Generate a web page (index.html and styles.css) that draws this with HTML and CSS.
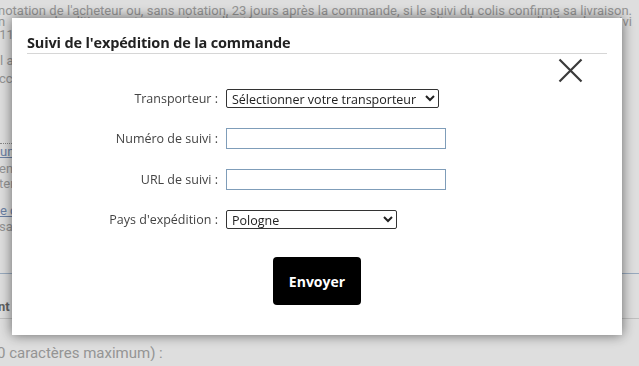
FILE: index.html
```html
<!DOCTYPE html>
<html lang="fr">
<head>
<meta charset="utf-8">
<title>Suivi de l'expédition de la commande</title>
<link rel="stylesheet" href="styles.css">
</head>
<body>
<div class="page">
  <p class="bg-line l1">notation de l'acheteur ou, sans notation, 23 jours après la commande, si le suivi du colis confirme sa livraison.</p>
  <p class="bg-line l2">n cas de litige, notre service client vous accompagne ; consultez la page d'aide du suivi</p>
  <p class="bg-line l3">'11 avril</p>
  <p class="bg-line l4">l a été expédié.</p>
  <p class="bg-line l5">cc</p>
  <div class="bg-dots"></div>
  <p class="bg-line l6"><a class="bg-link">un</a></p>
  <p class="bg-line l7">enr</p>
  <p class="bg-line l8">ter</p>
  <p class="bg-line l9"><a class="bg-link">e c</a></p>
  <p class="bg-line l10">sac</p>
  <div class="bg-rule blue"></div>
  <p class="bg-line bold l11">nt</p>
  <div class="bg-rule grey"></div>
  <p class="bg-line l12">0 caractères maximum) :</p>
</div>
<div class="overlay"></div>
<div class="modal" role="dialog">
  <div class="modal-header">
    <h2 class="modal-title">Suivi de l'expédition de la commande</h2>
  </div>
  <button class="close" aria-label="Fermer">
    <svg width="25" height="25" viewBox="0 0 25 25"><path d="M1.5 1.5 L23.5 23.5 M23.5 1.5 L1.5 23.5" stroke="#3a3a3a" stroke-width="2.2" fill="none"/></svg>
  </button>
  <form class="form">
    <div class="row">
      <label class="label">Transporteur :</label>
      <select class="select carrier"><option>Sélectionner votre transporteur</option></select>
    </div>
    <div class="row">
      <label class="label">Numéro de suivi :</label>
      <input class="input" type="text">
    </div>
    <div class="row">
      <label class="label">URL de suivi :</label>
      <input class="input" type="text">
    </div>
    <div class="row">
      <label class="label">Pays d'expédition :</label>
      <select class="select country"><option>Pologne</option></select>
    </div>
    <div class="actions">
      <button type="button" class="submit">Envoyer</button>
    </div>
  </form>
</div>
</body>
</html>
```
FILE: styles.css
```css
html, body {
  margin: 0;
  padding: 0;
}
body {
  background: #ffffff;
  font-family: "Open Sans", "Noto Sans", sans-serif;
  width: 639px;
  height: 366px;
  overflow: hidden;
  position: relative;
}
.page {
  color: #ababab;
  font-family: Roboto, "Open Sans", sans-serif;
  font-size: 13px;
  line-height: 14px;
  overflow: hidden;
  width: 639px;
}
.bg-line {
  margin: 0;
  white-space: nowrap;
}
.l1 {
  padding-top: 4px;
  margin-left: -2px;
  width: 634px;
  text-align: justify;
  text-align-last: justify;
}
.l2 {
  margin-top: -3px;
  margin-left: -2px;
  width: 634px;
  text-align: justify;
  text-align-last: justify;
}
.l3 { margin-top: -1px; margin-left: -3px; }
.l4 { margin-top: 12px; }
.l5 { margin-top: 4px; margin-left: -1px; }
.bg-dots {
  margin-top: 57px;
  border-top: 1px dotted #9a9a9a;
  width: 40px;
}
.l6 { margin-top: 1px; }
.bg-link { color: #7d95bd; text-decoration: underline; }
.l7 { margin-top: 3px; margin-left: -1px; }
.l8 { margin-top: 1px; margin-left: -1px; }
.l9 { margin-top: 13px; }
.l10 { margin-top: 2px; margin-left: -1px; }
.bg-rule { height: 0; }
.bg-rule.blue { margin-top: 39px; border-top: 1px solid #afc3da; }
.bg-rule.grey { margin-top: 4px; border-top: 1px solid #dcdcdc; }
.bold { font-weight: 700; color: #707070; }
.l11 { margin-top: 26px; margin-left: -2px; }
.l12 { margin-top: 26px; margin-left: -3px; font-size: 15px; line-height: 16px; }

.overlay {
  position: fixed;
  inset: 0;
  background: rgba(0, 0, 0, 0.13);
}
.modal {
  position: fixed;
  left: 12px;
  top: 18px;
  width: 610px;
  height: 317px;
  background: #ffffff;
  box-shadow: 0 0 12px rgba(0, 0, 0, 0.55);
  box-sizing: border-box;
}
.modal-header {
  margin: 0 15px;
  padding-top: 14px;
  border-bottom: 1px solid #d6d6d6;
}
.modal-title {
  margin: 0;
  font-family: "Open Sans", sans-serif;
  font-weight: 700;
  font-size: 14.5px;
  line-height: 21px;
  color: #222;
  letter-spacing: -0.15px;
}
.close {
  position: absolute;
  left: 546px;
  top: 40px;
  width: 25px;
  height: 25px;
  padding: 0;
  border: 0;
  background: transparent;
}
.close svg { display: block; }
.form {
  margin-top: 24px;
  font-size: 13px;
}
.row {
  display: grid;
  grid-template-columns: 206px auto;
  column-gap: 8px;
  align-items: center;
  height: 40.5px;
  justify-items: start;
}
.label {
  justify-self: end;
  color: #444;
  font-family: "Open Sans", sans-serif;
  font-size: 12.5px;
}
.select {
  font-family: "Open Sans", sans-serif;
  font-size: 12.5px;
  color: #222;
  height: 19px;
  padding: 0 1px;
  border: 1px solid #333;
  border-radius: 2px;
  background: #fff;
}
.carrier { width: 213px; }
.country { width: 171px; }
.input {
  width: 220px;
  height: 21px;
  box-sizing: border-box;
  border: 1px solid #7f9db9;
  border-radius: 0;
  padding: 0 3px;
  margin: 0;
}
.actions {
  display: flex;
  justify-content: center;
  margin-top: 17px;
}
.submit {
  width: 88px;
  height: 48px;
  background: #000;
  color: #fff;
  border: 0;
  border-radius: 4px;
  font-family: "Open Sans", sans-serif;
  font-weight: 700;
  font-size: 14px;
  padding: 0;
}
```
